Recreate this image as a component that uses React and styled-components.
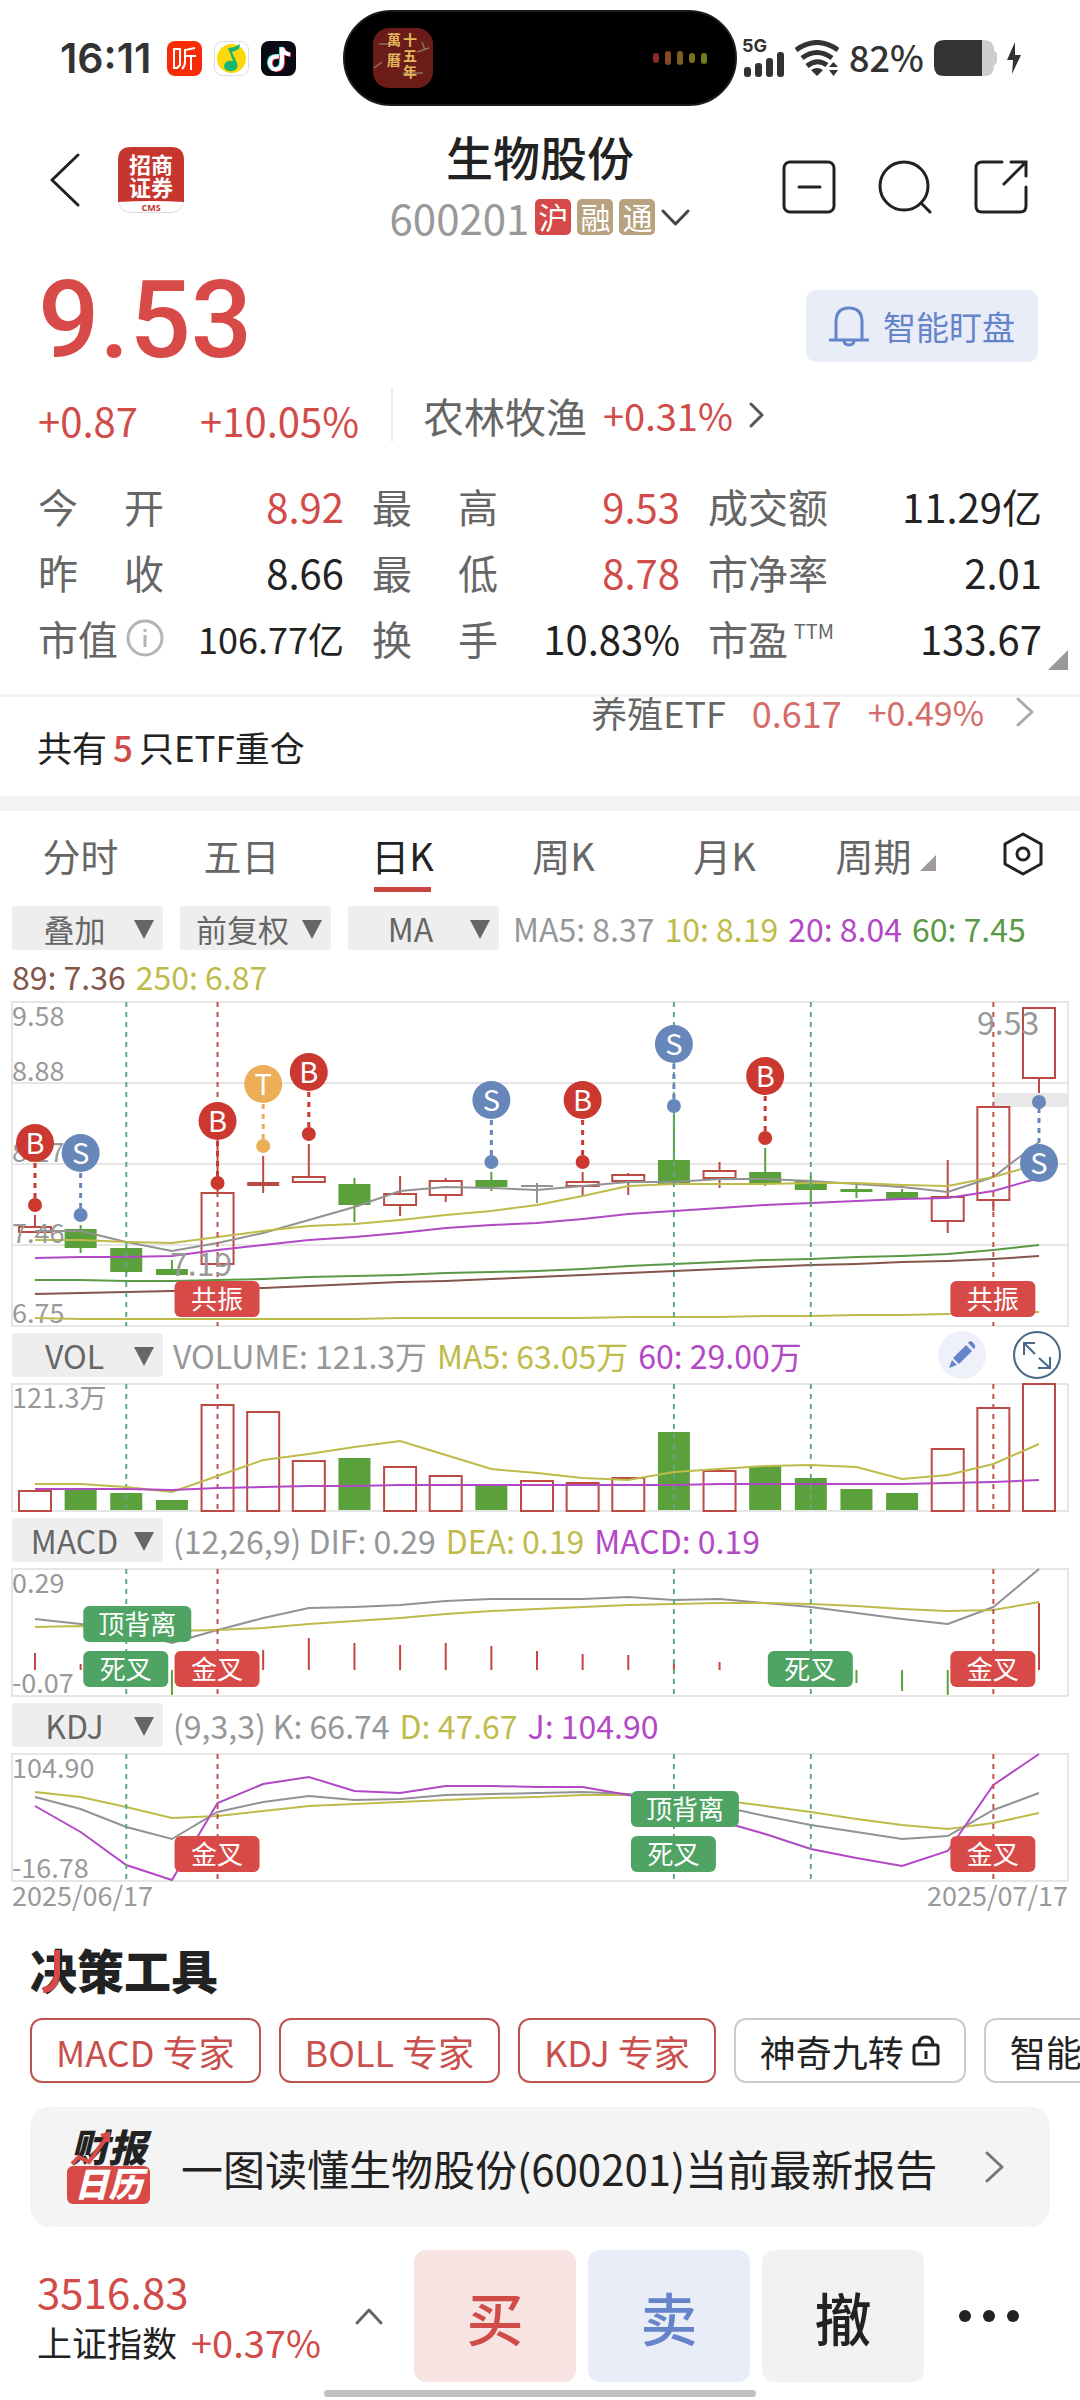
import React from 'react';
import styled, { createGlobalStyle } from 'styled-components';

const c = {
  red: '#d14b49',
  ink: '#222222',
  label: '#666666',
  muted: '#999999',
  blue: '#6584ca',
  line: '#e6e6e6',
  band: '#f2f3f5',
  gray: '#969799',
  yellow: '#bfbb4a',
  purple: '#b348c6',
  green: '#5a9a46',
  brown: '#85544a',
  candleRed: '#bb4a42',
  candleGreen: '#5ba13b',
  tagRed: '#d84a48',
  tagGreen: '#4fa463',
};

const Global = createGlobalStyle`
  * { box-sizing: border-box; }
  html { -webkit-text-size-adjust: 100%; }
  body {
    margin: 0;
    background: #fff;
    color: ${c.ink};
    font-family: "Noto Sans CJK SC", "Noto Sans", sans-serif;
  }
  button, select {
    font: inherit;
    color: inherit;
    margin: 0;
    padding: 0;
    border: 0;
    background: none;
    cursor: pointer;
  }
  a { color: inherit; text-decoration: none; }
  h1, h2, p, dl, dt, dd { margin: 0; font-weight: inherit; }
  svg { display: block; flex: none; }
`;

const Page = styled.main`
  display: flex;
  flex-direction: column;
  overflow: hidden;
`;

/* ---------- status bar ---------- */

const StatusBar = styled.div`
  display: grid;
  grid-template-columns: 1fr 394px 1fr;
  align-items: center;
  height: 116px;
  color: #333;
`;
const StatusLeft = styled.div`
  display: flex;
  align-items: center;
  gap: 12px;
  padding-left: 60px;
`;
const Clock = styled.span`
  margin-right: 4px;
  font-family: Inter, sans-serif;
  font-weight: 600;
  font-size: 41px;
  line-height: 44px;
`;
const Island = styled.div`
  display: flex;
  align-items: center;
  justify-content: space-between;
  height: 96px;
  padding: 0 28px;
  border: 2px solid #1c1c1e;
  border-radius: 48px;
  background: #000;
`;
const StatusRight = styled.div`
  display: flex;
  align-items: center;
  gap: 10px;
  padding-left: 5px;
`;
const Signal = styled.div`
  display: flex;
  flex-direction: column;
  width: 43px;
`;
const Network = styled.span`
  font-family: Inter, sans-serif;
  font-weight: 700;
  font-size: 18px;
  line-height: 12px;
`;
const Battery = styled.span`
  padding-bottom: 4px;
  font-weight: 500;
  font-size: 36px;
  line-height: 40px;
`;

/* ---------- title bar ---------- */

const Header = styled.header`
  display: grid;
  grid-template-columns: 1fr auto 1fr;
  align-items: start;
  padding: 12px 50px 0;
`;
const HeaderLeft = styled.div`
  display: flex;
  gap: 38px;
  padding-top: 19px;
`;
const HeaderRight = styled.div`
  display: flex;
  justify-content: flex-end;
  gap: 42px;
  padding: 32px 2px 0 0;
`;
const Title = styled.div`
  display: flex;
  flex-direction: column;
  align-items: center;
  gap: 10px;
`;
const StockName = styled.h1`
  font-size: 47px;
  font-weight: 500;
  line-height: 56px;
`;
const CodeButton = styled.button`
  display: flex;
  align-items: center;
  gap: 6px;
  color: ${c.muted};
  font-size: 42px;
  line-height: 46px;
`;
const Tag = styled.span`
  width: 36px;
  height: 36px;
  border-radius: 5px;
  background: ${(p) => p.$color};
  color: #fff;
  font-size: 30px;
  line-height: 34px;
  text-align: center;
`;

/* ---------- quote ---------- */

const Quote = styled.section`
  position: relative;
  padding: 22px 38px 23px;
  border-bottom: 3px solid ${c.band};
`;
const PriceRow = styled.div`
  display: flex;
  justify-content: space-between;
  align-items: flex-start;
  padding-right: 4px;
`;
const Price = styled.span`
  color: ${c.tagRed};
  font-family: Roboto, sans-serif;
  font-size: 108px;
  font-weight: 500;
  line-height: 116px;
`;
const WatchButton = styled.button`
  display: flex;
  align-items: center;
  gap: 14px;
  height: 72px;
  margin-top: 28px;
  padding: 0 23px;
  border-radius: 10px;
  background: #e8edf8;
  color: ${c.blue};
  font-size: 33px;
`;
const ChangeRow = styled.div`
  display: flex;
  height: 54px;
  margin-top: 10px;
  font-size: 40px;
  color: ${c.red};
`;
const Changes = styled.div`
  display: flex;
  justify-content: space-between;
  align-self: flex-end;
  width: 353px;
  padding-right: 32px;
  line-height: 44px;
`;
const Sector = styled.a`
  display: flex;
  align-items: center;
  gap: 16px;
  padding-left: 30px;
  border-left: 2px solid #eee;
  line-height: 54px;
  font-size: 38px;
`;
const SectorName = styled.span`
  color: ${c.label};
  font-size: 41px;
`;
const Stats = styled.dl`
  display: grid;
  grid-template-columns: 306fr 308fr 334fr;
  column-gap: 28px;
  margin-top: 31px;
  font-size: 40px;
  line-height: 66px;
`;
const Stat = styled.div`
  display: flex;
  justify-content: space-between;
`;
const StatLabel = styled.dt`
  display: flex;
  align-items: center;
  justify-content: space-between;
  min-width: 126px;
  color: ${c.label};
  white-space: nowrap;
`;
const StatValue = styled.dd`
  color: ${(p) => (p.$up ? c.red : c.ink)};
  font-size: ${(p) => (p.$small ? 36 : 40)}px;
  white-space: nowrap;
`;
const Ttm = styled.sup`
  align-self: flex-start;
  margin-top: 14px;
  font-size: 20px;
  line-height: 24px;
`;
const Corner = styled.span`
  position: absolute;
  right: 12px;
  bottom: 24px;
  border-left: 20px solid transparent;
  border-bottom: 20px solid ${c.muted};
`;

/* ---------- ETF strip ---------- */

const EtfStrip = styled.section`
  display: flex;
  justify-content: space-between;
  align-items: center;
  height: 99px;
  padding: 0 46px 0 37px;
  font-size: 35px;
`;
const EtfCount = styled.b`
  padding: 0 6px;
  color: ${c.red};
  font-weight: 500;
`;
const EtfQuote = styled.a`
  display: flex;
  align-items: center;
  align-self: flex-start;
  gap: 26px;
  color: #d56c69;
  font-size: 36px;
  line-height: 30px;
`;
const EtfName = styled.span`
  color: ${c.label};
`;
const EtfChange = styled.span`
  padding-right: 6px;
  font-size: 34px;
`;
const Band = styled.div`
  height: 15px;
  background: ${c.band};
`;

/* ---------- period tabs ---------- */

const Tabs = styled.nav`
  display: grid;
  grid-template-columns: repeat(6, 161fr) 114fr;
  height: 95px;
`;
const Tab = styled.button`
  display: flex;
  flex-direction: column;
  align-items: center;
  padding-top: 18px;
  color: ${(p) => (p.$active ? c.ink : c.label)};
  font-size: 38px;
  line-height: 52px;
  &::after {
    content: "";
    width: 57px;
    height: 5px;
    margin-top: 6px;
    background: ${(p) => (p.$active ? '#c9453f' : 'transparent')};
  }
`;
const TabText = styled.span`
  display: flex;
  align-items: baseline;
  gap: 8px;
`;
const Wedge = styled.i`
  border-left: 16px solid transparent;
  border-bottom: 16px solid #a09a9a;
`;
const Settings = styled.button`
  display: flex;
  justify-content: center;
  padding-top: 21px;
`;

/* ---------- charts ---------- */

const Charts = styled.section`
  display: flex;
  flex-direction: column;
`;
const Legend = styled.div`
  display: flex;
  flex-wrap: ${(p) => (p.$wrap ? 'wrap' : 'nowrap')};
  align-items: center;
  column-gap: 10px;
  height: ${(p) => (p.$wrap ? 'auto' : '44px')};
  margin: ${(p) => (p.$wrap ? '0' : '7px 0')};
  padding: 0 12px;
  font-size: 32px;
  line-height: 44px;
  white-space: nowrap;
`;
const Pickers = styled.div`
  display: flex;
  gap: 17px;
  margin-right: 4px;
`;
const Value = styled.span`
  color: ${(p) => p.$color};
  ${(p) => p.$tall && 'line-height: 52px;'}
`;
const Picker = styled.label`
  position: relative;
  width: 151px;
  height: 44px;
  border-radius: 4px;
  background: #eeeeee;
  &::after {
    content: "";
    position: absolute;
    right: 9px;
    top: 14px;
    border: 10px solid transparent;
    border-top: 19px solid ${c.label};
    border-bottom: 0;
    pointer-events: none;
  }
`;
const Select = styled.select`
  appearance: none;
  width: 100%;
  height: 44px;
  padding-right: 26px;
  color: ${c.label};
  font-size: ${(p) => (p.$cjk ? 31 : 32)}px;
  line-height: 44px;
  text-align: center;
  text-align-last: center;
`;
const LegendTools = styled.div`
  display: flex;
  gap: 27px;
  margin-left: auto;
  padding-right: 7px;
`;
const Chart = styled.svg`
  width: 100%;
  height: auto;
  overflow: visible;
  font-family: "Noto Sans CJK SC", sans-serif;
`;
const Dates = styled.div`
  display: flex;
  justify-content: space-between;
  padding: 0 12px;
  color: ${c.muted};
  font-size: 27px;
  line-height: 28px;
`;

/* ---------- tools ---------- */

const ToolsTitle = styled.h2`
  position: relative;
  align-self: flex-start;
  margin: 32px 0 0 30px;
  font-size: 47px;
  font-weight: 900;
  line-height: 56px;
`;
const TitleStroke = styled.svg`
  position: absolute;
  left: 10px;
  top: 7px;
`;
const Chips = styled.div`
  display: flex;
  gap: 18px;
  margin-top: 21px;
  padding-left: 30px;
  overflow: hidden;
`;
const Chip = styled.button`
  display: flex;
  flex: none;
  align-items: center;
  gap: 8px;
  height: 65px;
  padding: 0 24px;
  border: 2px solid ${(p) => (p.$on ? '#bf5350' : '#cccccc')};
  border-radius: 12px;
  color: ${(p) => (p.$on ? '#c9504d' : c.ink)};
  font-size: 36px;
  line-height: 60px;
`;
const Report = styled.a`
  display: flex;
  align-items: center;
  height: 120px;
  margin: 24px 30px 0;
  padding: 0 46px 0 37px;
  border-radius: 20px;
  background: #f4f4f4;
`;
const ReportLogo = styled.span`
  position: relative;
  display: flex;
  flex-direction: column;
  gap: 4px;
  width: 83px;
  font-size: 38px;
  font-style: italic;
  font-weight: 900;
  line-height: 32px;
  text-align: center;
  white-space: nowrap;
`;
const ReportLogoBox = styled.span`
  height: 38px;
  border-radius: 6px;
  background: ${c.tagRed};
  color: #fff;
  font-size: 34px;
  line-height: 34px;
`;
const ReportArrow = styled.svg`
  position: absolute;
  left: 3px;
  top: 0;
`;
const ReportText = styled.span`
  flex: 1;
  padding-left: 31px;
  font-size: 42px;
  white-space: nowrap;
`;

/* ---------- bottom bar ---------- */

const Bottom = styled.footer`
  display: flex;
  align-items: center;
  margin-top: 23px;
  padding: 0 60px 0 37px;
`;
const IndexButton = styled.button`
  display: flex;
  flex: 1;
  align-items: center;
  justify-content: space-between;
  padding-right: 31px;
  text-align: left;
`;
const IndexText = styled.span`
  display: flex;
  flex-direction: column;
  font-size: 35px;
  line-height: 51px;
  white-space: nowrap;
`;
const IndexLine = styled.span`
  display: flex;
  gap: 14px;
`;
const Up = styled.span`
  color: ${c.red};
  font-size: ${(p) => (p.$large ? 42 : 38)}px;
`;
const Actions = styled.div`
  display: flex;
  gap: 12px;
`;
const Action = styled.button`
  width: 162px;
  height: 132px;
  border-radius: 12px;
  background: ${(p) => p.$bg};
  color: ${(p) => p.$fg};
  font-size: 57px;
  font-weight: 500;
`;
const More = styled.button`
  margin-left: 34px;
`;
const HomeBar = styled.div`
  align-self: center;
  width: 40%;
  height: 7px;
  margin: 8px 0 3px;
  border-radius: 4px;
  background: #c1c1c1;
`;

/* ---------- chart data ---------- */

const px = (i) => 35 + i * (1004 / 22);
const CROSS = [
  [2, 'g'], [4, 'r'], [14, 'g'], [17, 'g'], [21, 'r'],
];
// [kind, body top, body bottom, high, low]
const CANDLES = [
  ['r', 225, 230, 213, 230], ['g', 227, 246, 223, 251], ['g', 246, 270, 244, 271],
  ['g', 267, 273, 258, 273], ['r', 191, 262, 138, 262], ['f', 180, 184, 154, 191],
  ['r', 175, 180, 142, 180], ['g', 182, 203, 176, 220], ['r', 192, 203, 174, 214],
  ['r', 179, 193, 176, 200], ['g', 178, 185, 170, 189], ['n', 183, 185, 181, 201],
  ['r', 180, 184, 170, 194], ['r', 173, 179, 171, 193], ['g', 158, 182, 113, 182],
  ['r', 169, 176, 160, 186], ['g', 170, 182, 146, 184], ['g', 179, 188, 174, 205],
  ['g', 187, 190, 182, 196], ['g', 190, 197, 187, 197], ['r', 195, 219, 158, 231],
  ['r', 105, 198, 105, 209], ['r', 6, 76, 6, 91],
];
const MA = [
  ['#929292', [229, 229, 240, 249, 241, 231, 218, 205, 189, 185, 186, 188, 184, 180, 180, 177, 177, 179, 182, 185, 190, 175, 140]],
  [c.yellow, [238, 238, 240, 241, 235, 229, 224, 222, 218, 213, 209, 203, 194, 184, 182, 182, 182, 181, 181, 183, 184, 175, 162]],
  [c.purple, [256, 255, 255, 254, 248, 243, 238, 235, 231, 226, 223, 221, 217, 212, 209, 206, 203, 201, 199, 197, 196, 189, 176]],
  [c.green, [278, 278, 279, 279, 278, 277, 275, 274, 273, 271, 270, 269, 267, 264, 262, 260, 258, 257, 255, 254, 252, 248, 243]],
  [c.brown, [292, 291, 290, 289, 287, 286, 284, 282, 280, 279, 277, 275, 273, 271, 269, 267, 265, 263, 262, 260, 259, 257, 254]],
  [c.yellow, [316, 317, 317, 317, 317, 317, 317, 317, 316, 316, 316, 316, 316, 315, 315, 315, 314, 314, 313, 313, 312, 311, 310]],
];
// [index, letter, circle y, dot y]
const MARKS = [
  [0, 'B', 141, 203], [1, 'S', 151, 213], [4, 'B', 119, 181], [5, 'T', 82, 144],
  [6, 'B', 70, 132], [10, 'S', 98, 160], [12, 'B', 98, 160], [14, 'S', 42, 104],
  [16, 'B', 74, 136], [22, 'S', 161, 100],
];
const MARK_COLOR = { B: '#cb3830', S: '#6787bb', T: '#ecae56' };
const VOL = [107, 106, 109, 116, 21, 28, 77, 74, 83, 92, 100, 97, 99, 94, 48, 87, 82, 94, 105, 109, 65, 24, 0];
const VOL_MA = [
  [c.yellow, [100, 100, 103, 108, 92, 76, 70, 63, 57, 71, 85, 89, 94, 96, 88, 85, 82, 81, 83, 95, 91, 80, 60]],
  [c.purple, [105, 105, 105, 106, 104, 103, 102, 102, 101, 101, 101, 101, 101, 101, 101, 100, 100, 100, 100, 100, 99, 98, 96]],
];
const MACD = [
  ['#929292', [50, 55, 62, 74, 61, 49, 39, 38, 36, 32, 30, 30, 30, 28, 31, 30, 34, 38, 44, 50, 55, 38, 0]],
  [c.yellow, [58, 57, 59, 62, 61, 59, 55, 52, 49, 45, 42, 40, 38, 36, 35, 34, 34, 35, 37, 40, 42, 41, 33]],
];
const HIST = [84, 95, 108, 126, 92, 81, 69, 74, 76, 74, 77, 82, 85, 86, 92, 93, 101, 108, 114, 122, 126, 90, 34];
const KDJ = [
  ['#929292', [43, 55, 73, 85, 58, 48, 42, 46, 45, 41, 40, 39, 38, 40, 44, 52, 62, 71, 78, 85, 82, 56, 39]],
  [c.yellow, [38, 43, 53, 64, 62, 57, 52, 50, 48, 46, 44, 43, 41, 41, 43, 46, 52, 58, 65, 71, 75, 69, 59]],
  [c.purple, [52, 78, 111, 126, 49, 30, 23, 37, 39, 32, 32, 33, 33, 41, 50, 67, 80, 95, 104, 112, 97, 31, 0]],
];

/* ---------- chart parts ---------- */

const Frame = ({ h, rows = 1 }) => (
  <g stroke={c.line} strokeWidth="2" fill="none">
    <rect x="12" y="0" width="1056" height={h} />
    {Array.from({ length: rows - 1 }, (_, i) => (
      <path key={i} d={`M12 ${((i + 1) * h) / rows}H1068`} />
    ))}
  </g>
);
const Crosses = ({ h }) =>
  CROSS.map(([i, k]) => (
    <path key={i} d={`M${px(i)} 0V${h}`} strokeWidth="2" strokeDasharray="5 5"
      stroke={k === 'g' ? '#5fa880' : '#c2504c'} />
  ));
const Lines = ({ series }) =>
  series.map(([color, ys], n) => (
    <polyline key={n} fill="none" stroke={color} strokeWidth="2"
      points={ys.map((y, i) => `${px(i)},${y}`).join(' ')} />
  ));
const Axis = ({ y, children }) => (
  <text x="12" y={y} fontSize="27" fill={c.muted}>{children}</text>
);
const Badge = ({ i, y, red, children }) => {
  const w = children.length === 3 ? 108 : 85;
  const x = px(i) - 43;
  return (
    <g>
      <rect x={x} y={y} width={w} height="36" rx="6" fill={red ? c.tagRed : c.tagGreen} />
      <text x={x + w / 2} y={y + 28} fontSize="26" fill="#fff" textAnchor="middle">{children}</text>
    </g>
  );
};

function CandleChart() {
  return (
    <Chart viewBox="0 0 1080 324" role="img" aria-label="日K">
      <Frame h={324} rows={4} />
      <rect x={px(21)} y="91" width="75" height="14" fill="#e8e8e8" />
      <Axis y={24}>9.58</Axis>
      <Axis y={79}>8.88</Axis>
      <Axis y={160}>8.17</Axis>
      <Axis y={321}>6.75</Axis>
      {CANDLES.map(([k, t, b, hi, lo], i) => {
        const color = k === 'g' ? c.candleGreen : k === 'n' ? '#929292' : c.candleRed;
        const hollow = k === 'r';
        return (
          <g key={i} stroke={color} strokeWidth="2">
            <path d={`M${px(i)} ${hi}V${t}M${px(i)} ${b}V${lo}`} />
            <rect x={px(i) - 16} y={t} width="32" height={b - t}
              fill={hollow ? 'none' : color} strokeWidth={hollow ? 2 : 0} />
          </g>
        );
      })}
      <Lines series={MA} />
      <Axis y={241}>7.46</Axis>
      <Crosses h={324} />
      <g fontSize="32" fill={c.muted}>
        <text x="170" y="274">7.19</text>
        <text x="977" y="33">9.53</text>
      </g>
      {MARKS.map(([i, s, y, d]) => (
        <g key={i} fill={MARK_COLOR[s]}>
          <path d={`M${px(i)} ${y}V${d}`} stroke={MARK_COLOR[s]} strokeWidth="3" strokeDasharray="5 5" />
          <circle cx={px(i)} cy={d} r="7" />
          <circle cx={px(i)} cy={y} r="19" />
          <text x={px(i)} y={y + 11} fontSize="29" fill="#fff" textAnchor="middle">{s}</text>
        </g>
      ))}
      <Badge i={4} y={279} red>共振</Badge>
      <Badge i={21} y={279} red>共振</Badge>
    </Chart>
  );
}

function VolumeChart() {
  return (
    <Chart viewBox="0 0 1080 127" role="img" aria-label="VOL">
      <Frame h={127} />
      <Axis y={24}>121.3万</Axis>
      {VOL.map((y, i) =>
        CANDLES[i][0] === 'g' ? (
          <rect key={i} x={px(i) - 16} y={y} width="32" height={126 - y} fill={c.candleGreen} />
        ) : (
          <rect key={i} x={px(i) - 16} y={y} width="32" height={127 - y} fill="none"
            stroke={c.candleRed} strokeWidth="2" />
        ),
      )}
      <Crosses h={127} />
      <Lines series={VOL_MA} />
    </Chart>
  );
}

function MacdChart() {
  return (
    <Chart viewBox="0 0 1080 127" role="img" aria-label="MACD">
      <Frame h={127} />
      <Axis y={24}>0.29</Axis>
      <Axis y={124}>-0.07</Axis>
      {HIST.map((y, i) => (
        <path key={i} d={`M${px(i)} 101V${y}`} strokeWidth="2"
          stroke={y > 101 ? c.candleGreen : '#c4453e'} />
      ))}
      <Lines series={MACD} />
      <Crosses h={127} />
      <Badge i={2} y={37}>顶背离</Badge>
      <Badge i={2} y={82}>死叉</Badge>
      <Badge i={4} y={82} red>金叉</Badge>
      <Badge i={17} y={82}>死叉</Badge>
      <Badge i={21} y={82} red>金叉</Badge>
    </Chart>
  );
}

function KdjChart() {
  return (
    <Chart viewBox="0 0 1080 127" role="img" aria-label="KDJ">
      <Frame h={127} />
      <Axis y={24}>104.90</Axis>
      <Axis y={124}>-16.78</Axis>
      <Lines series={KDJ} />
      <Crosses h={127} />
      <Badge i={4} y={82} red>金叉</Badge>
      <Badge i={14} y={37}>顶背离</Badge>
      <Badge i={14} y={82}>死叉</Badge>
      <Badge i={21} y={82} red>金叉</Badge>
    </Chart>
  );
}

/* ---------- icons ---------- */

const Chevron = ({ w, h, dir = 'right', color = c.ink, stroke = 3 }) => {
  const d = {
    right: `M2 2L${w - 2} ${h / 2}L2 ${h - 2}`,
    left: `M${w - 2} 2L2 ${h / 2}L${w - 2} ${h - 2}`,
    down: `M2 2L${w / 2} ${h - 2}L${w - 2} 2`,
    up: `M2 ${h - 2}L${w / 2} 2L${w - 2} ${h - 2}`,
  }[dir];
  return (
    <svg width={w} height={h} viewBox={`0 0 ${w} ${h}`} fill="none" stroke={color}
      strokeWidth={stroke} strokeLinecap="round" strokeLinejoin="round"><path d={d} /></svg>
  );
};

const AppIcons = () => (
  <>
    <svg width="35" height="35" viewBox="0 0 35 35">
      <rect width="35" height="35" rx="8" fill="#f72c07" />
      <g fill="none" stroke="#fff" strokeWidth="2">
        <path d="M7 8h6v16l-3 3H7zM28 7l-10 2v12q0 4-3 7M18 15h11M24 15v14" />
      </g>
    </svg>
    <svg width="35" height="35" viewBox="0 0 35 35">
      <rect x=".5" y=".5" width="34" height="34" rx="8" fill="#fff" stroke="#ddd" />
      <circle cx="17.500" cy="17.500" r="14.500" fill="#fdd908" />
      <path d="M14 7Q20 7 26 3L25 8Q21 10 18 11L23 22Q25 28 19 30Q10 31 10 25Q11 19 19 20Z" fill="#17b573" />
    </svg>
    <svg width="35" height="35" viewBox="0 0 35 35" fill="none" strokeWidth="4">
      <rect width="35" height="35" rx="8" fill="#0a0a14" />
      <path d="M17 15q-9-1-9 7 1 6 6 6 6-1 6-7V6q1 6 8 7" stroke="#25f4ee" />
      <path d="M19 16q-9-1-9 7 1 6 6 6 6-1 6-7V7q1 6 8 7" stroke="#fe2c55" />
      <path d="M18 15.500q-9-1-9 7 1 6 6 6 6-1 6-7V6.500q1 6 8 7" stroke="#fff" />
    </svg>
  </>
);

const IslandCover = () => (
  <svg width="60" height="60" viewBox="0 0 60 60" fontFamily='"Noto Sans CJK SC", sans-serif'>
    <rect width="60" height="60" rx="16" fill="#6b1c18" />
    <path d="M6 16h12M30 45h20M1 40l8-6M44 24l12-4M49 14l3 8" stroke="#8a7458" strokeWidth="1.500" />
    <g fill="#e3b65c" fontSize="14" fontWeight="700">
      <text x="14" y="17">萬</text><text x="14" y="37">曆</text>
      <text x="30" y="17">十</text><text x="30" y="33">五</text><text x="30" y="49">年</text>
    </g>
  </svg>
);

const Equalizer = () => (
  <svg width="54" height="14" viewBox="0 0 54 14">
    <rect x="0" y="2" width="6" height="10" rx="3" fill="#8a2a22" />
    <rect x="12" y="0" width="6" height="14" rx="3" fill="#84491f" />
    <rect x="24" y="0" width="6" height="14" rx="3" fill="#82601e" />
    <rect x="36" y="2" width="6" height="10" rx="3" fill="#7a6f1f" />
    <rect x="48" y="2" width="6" height="11" rx="3" fill="#757a22" />
  </svg>
);

const BrandLogo = () => (
  <svg width="66" height="66" viewBox="0 0 66 66" fontFamily='"Noto Sans CJK SC", sans-serif'>
    <rect x=".5" y=".5" width="65" height="65" rx="12" fill="#fff" stroke="#ddd" />
    <path d="M0 55V13Q0 0 13 0H53Q66 0 66 13V55Q33 53 0 55Z" fill="#c7352f" />
    <g fill="#fff" fontSize="22" fontWeight="700" textAnchor="middle">
      <text x="33" y="26">招商</text><text x="33" y="49">证券</text>
    </g>
    <text x="33" y="64" fill="#c7352f" fontSize="9" fontWeight="700" textAnchor="middle"
      fontFamily="Open Sans, sans-serif">CMS</text>
  </svg>
);

function Picked({ name, value }) {
  return (
    <Picker>
      <Select aria-label={name} defaultValue={value} $cjk={/[\u4e00-\u9fff]/.test(value)}>
        <option>{value}</option>
      </Select>
    </Picker>
  );
}

const STATS = [
  ['今开', '8.92', 1], ['最高', '9.53', 1], ['成交额', '11.29亿'],
  ['昨收', '8.66'], ['最低', '8.78', 1], ['市净率', '2.01'],
  ['市值', '106.77亿'], ['换手', '10.83%'], ['市盈', '133.67'],
];

export default function App() {
  return (
    <Page>
      <Global />
      <StatusBar>
        <StatusLeft>
          <Clock>16:11</Clock>
          <AppIcons />
        </StatusLeft>
        <Island>
          <IslandCover />
          <Equalizer />
        </Island>
        <StatusRight>
          <Signal>
            <Network>5G</Network>
            <svg width="43" height="25" viewBox="0 0 43 25" fill="#333">
              <rect x="2" y="15" width="7" height="10" rx="3" />
              <rect x="13" y="11" width="7" height="14" rx="3" />
              <rect x="24" y="6" width="7" height="19" rx="3" />
              <rect x="35" y="0" width="7" height="25" rx="3" />
            </svg>
          </Signal>
          <svg width="44" height="36" viewBox="0 0 44 36" fill="none" stroke="#333" strokeWidth="5">
            <path d="M1 10Q22-5 43 10M7 18Q22 7 37 18M12 26Q22 18 32 25" />
            <path d="M16 30Q22 26 28 30L22 36ZM34 27L38.500 22 43 27ZM34 30L38.500 36 43 30Z" fill="#333" stroke="none" />
          </svg>
          <Battery>82%</Battery>
          <svg width="63" height="36" viewBox="0 0 63 36">
            <path d="M48 0h2q10 0 10 10v1q3 1 3 4v6q0 3-3 4v1q0 10-10 10h-2z" fill="#ccc" />
            <path d="M48 0H10Q0 0 0 10v16q0 10 10 10h38z" fill="#333" />
          </svg>
          <svg width="14" height="32" viewBox="0 0 14 32"><path d="M8 0L0 18h6l-1 14 9-19H8z" fill="#333" /></svg>
        </StatusRight>
      </StatusBar>

      <Header>
        <HeaderLeft>
          <button aria-label="返回"><Chevron w={30} h={54} dir="left" /></button>
          <BrandLogo />
        </HeaderLeft>
        <Title>
          <StockName>生物股份</StockName>
          <CodeButton>
            600201
            <Tag $color="#d54a48">沪</Tag>
            <Tag $color="#b9a27e">融</Tag>
            <Tag $color="#b9a27e">通</Tag>
            <Chevron w={29} h={17} dir="down" color="#444" />
          </CodeButton>
        </Title>
        <HeaderRight>
          <button aria-label="删除自选">
            <svg width="54" height="54" viewBox="0 0 54 54" fill="none" stroke={c.ink} strokeWidth="3" strokeLinecap="round">
              <rect x="2" y="2" width="50" height="50" rx="6" /><path d="M17 27h21" />
            </svg>
          </button>
          <button aria-label="搜索">
            <svg width="54" height="54" viewBox="0 0 54 54" fill="none" stroke={c.ink} strokeWidth="3" strokeLinecap="round">
              <circle cx="26" cy="26" r="24" /><path d="M43 43l9 9" />
            </svg>
          </button>
          <button aria-label="分享">
            <svg width="54" height="54" viewBox="0 0 54 54" fill="none" stroke={c.ink} strokeWidth="3" strokeLinecap="round">
              <path d="M28 2H8Q2 2 2 8V46Q2 52 8 52H46Q52 52 52 46V27M37 2H52V16M52 2L30 24" />
            </svg>
          </button>
        </HeaderRight>
      </Header>

      <Quote>
        <PriceRow>
          <Price>9.53</Price>
          <WatchButton>
            <svg width="40" height="41" viewBox="0 0 40 41" fill="none" stroke={c.blue} strokeWidth="3">
              <path d="M7 34V16Q7 2 20 2Q33 2 33 16V34M0 34H40M15 34Q15 39 20 39Q25 39 25 34" />
            </svg>
            智能盯盘
          </WatchButton>
        </PriceRow>
        <ChangeRow>
          <Changes><span>+0.87</span><span>+10.05%</span></Changes>
          <Sector href="#sector">
            <SectorName>农林牧渔</SectorName>
            +0.31%
            <Chevron w={15} h={26} color="#555" />
          </Sector>
        </ChangeRow>
        <Stats>
          {STATS.map(([name, value, up]) => (
            <Stat key={name}>
              <StatLabel>
                {name === '市值' ? (
                  <>
                    <span>市值</span>
                    <svg width="38" height="38" viewBox="0 0 38 38" fill="none" stroke="#b4b4b4" strokeWidth="3">
                      <circle cx="19" cy="19" r="17" /><path d="M19 16v12M19 10v3" />
                    </svg>
                  </>
                ) : name === '市盈' ? (
                  <><span>市盈</span><Ttm>TTM</Ttm></>
                ) : name.length === 2 ? (
                  name.split('').map((ch) => <span key={ch}>{ch}</span>)
                ) : (
                  name
                )}
              </StatLabel>
              <StatValue $up={up} $small={name === '市值'}>{value}</StatValue>
            </Stat>
          ))}
        </Stats>
        <Corner />
      </Quote>

      <EtfStrip>
        <span>共有<EtfCount>5</EtfCount>只ETF重仓</span>
        <EtfQuote href="#etf">
          <EtfName>养殖ETF</EtfName>
          <span>0.617</span>
          <EtfChange>+0.49%</EtfChange>
          <Chevron w={18} h={30} color="#aaa" />
        </EtfQuote>
      </EtfStrip>
      <Band />

      <Tabs>
        {['分时', '五日', '日K', '周K', '月K'].map((t) => (
          <Tab key={t} $active={t === '日K'}><TabText>{t}</TabText></Tab>
        ))}
        <Tab aria-haspopup="menu"><TabText>周期<Wedge /></TabText></Tab>
        <Settings aria-label="设置">
          <svg width="42" height="44" viewBox="0 0 42 44" fill="none" stroke={c.ink} strokeWidth="3" strokeLinejoin="round">
            <path d="M21 2L39 12V32L21 42L3 32V12Z" /><circle cx="21" cy="22" r="6" />
          </svg>
        </Settings>
      </Tabs>

      <Charts>
        <Legend $wrap>
          <Pickers>
            <Picked name="叠加" value="叠加" />
            <Picked name="复权" value="前复权" />
            <Picked name="均线" value="MA" />
          </Pickers>
          <Value $color={c.gray}>MA5: 8.37</Value>
          <Value $color={c.yellow}>10: 8.19</Value>
          <Value $color={c.purple}>20: 8.04</Value>
          <Value $color={c.green}>60: 7.45</Value>
          <Value $color={c.brown} $tall>89: 7.36</Value>
          <Value $color={c.yellow} $tall>250: 6.87</Value>
        </Legend>
        <CandleChart />
        <Legend>
          <Picked name="成交量" value="VOL" />
          <Value $color={c.gray}>VOLUME: 121.3万</Value>
          <Value $color={c.yellow}>MA5: 63.05万</Value>
          <Value $color={c.purple}>60: 29.00万</Value>
          <LegendTools>
            <button aria-label="画线">
              <svg width="48" height="48" viewBox="0 0 48 48" fill="#6584ca">
                <circle cx="24" cy="24" r="24" fill="#eef1f9" />
                <path d="M15 27L28 14L34 20L21 33ZM30 12L32 10Q34 10 37 14Q38 16 36 18ZM14 29L19 34L11 37Z" />
              </svg>
            </button>
            <button aria-label="全屏">
              <svg width="48" height="48" viewBox="0 0 48 48" fill="none" stroke="#486a88" strokeWidth="2">
                <circle cx="24" cy="24" r="23" />
                <path d="M11 24V12H22M11 12L22 23M37 26V37H25M37 37L26 27" />
              </svg>
            </button>
          </LegendTools>
        </Legend>
        <VolumeChart />
        <Legend>
          <Picked name="指标一" value="MACD" />
          <Value $color={c.gray}>(12,26,9) DIF: 0.29</Value>
          <Value $color={c.yellow}>DEA: 0.19</Value>
          <Value $color={c.purple}>MACD: 0.19</Value>
        </Legend>
        <MacdChart />
        <Legend>
          <Picked name="指标二" value="KDJ" />
          <Value $color={c.gray}>(9,3,3) K: 66.74</Value>
          <Value $color={c.yellow}>D: 47.67</Value>
          <Value $color={c.purple}>J: 104.90</Value>
        </Legend>
        <KdjChart />
        <Dates><span>2025/06/17</span><span>2025/07/17</span></Dates>
      </Charts>

      <ToolsTitle>
        决策工具
        <TitleStroke width="22" height="46" viewBox="0 0 22 46" fill="none" stroke={c.tagRed} strokeWidth="6">
          <path d="M17 2V26Q16 41 3 42" />
        </TitleStroke>
      </ToolsTitle>
      <Chips>
        <Chip $on>MACD 专家</Chip>
        <Chip $on>BOLL 专家</Chip>
        <Chip $on>KDJ 专家</Chip>
        <Chip>
          神奇九转
          <svg width="28" height="31" viewBox="0 0 28 31" fill="none" stroke={c.ink} strokeWidth="3">
            <rect x="2" y="10" width="24" height="19" rx="2" /><path d="M7 10Q7 2 14 2Q21 2 21 10M14 16v8" />
          </svg>
        </Chip>
        <Chip>智能画线</Chip>
      </Chips>
      <Report href="#report">
        <ReportLogo>
          <span>财报</span>
          <ReportLogoBox>日历</ReportLogoBox>
          <ReportArrow width="44" height="38" viewBox="0 0 44 38">
            <path d="M2 34L9 27L19 32L37 7M31 6L38 4L38 12" fill="none" stroke={c.tagRed} strokeWidth="4" />
          </ReportArrow>
        </ReportLogo>
        <ReportText>一图读懂生物股份(600201)当前最新报告</ReportText>
        <Chevron w={19} h={32} color="#777" />
      </Report>

      <Bottom>
        <IndexButton>
          <IndexText>
            <Up $large>3516.83</Up>
            <IndexLine>上证指数<Up>+0.37%</Up></IndexLine>
          </IndexText>
          <Chevron w={28} h={17} dir="up" color="#666" />
        </IndexButton>
        <Actions>
          <Action $bg="#f7e3e2" $fg="#d14b49">买</Action>
          <Action $bg="#e8edf8" $fg="#6584ca">卖</Action>
          <Action $bg="#f2f2f2" $fg="#222">撤</Action>
        </Actions>
        <More aria-label="更多">
          <svg width="62" height="14" viewBox="0 0 62 14" fill={c.ink}>
            <circle cx="7" cy="7" r="6" /><circle cx="31" cy="7" r="6" /><circle cx="55" cy="7" r="6" />
          </svg>
        </More>
      </Bottom>
      <HomeBar />
    </Page>
  );
}
